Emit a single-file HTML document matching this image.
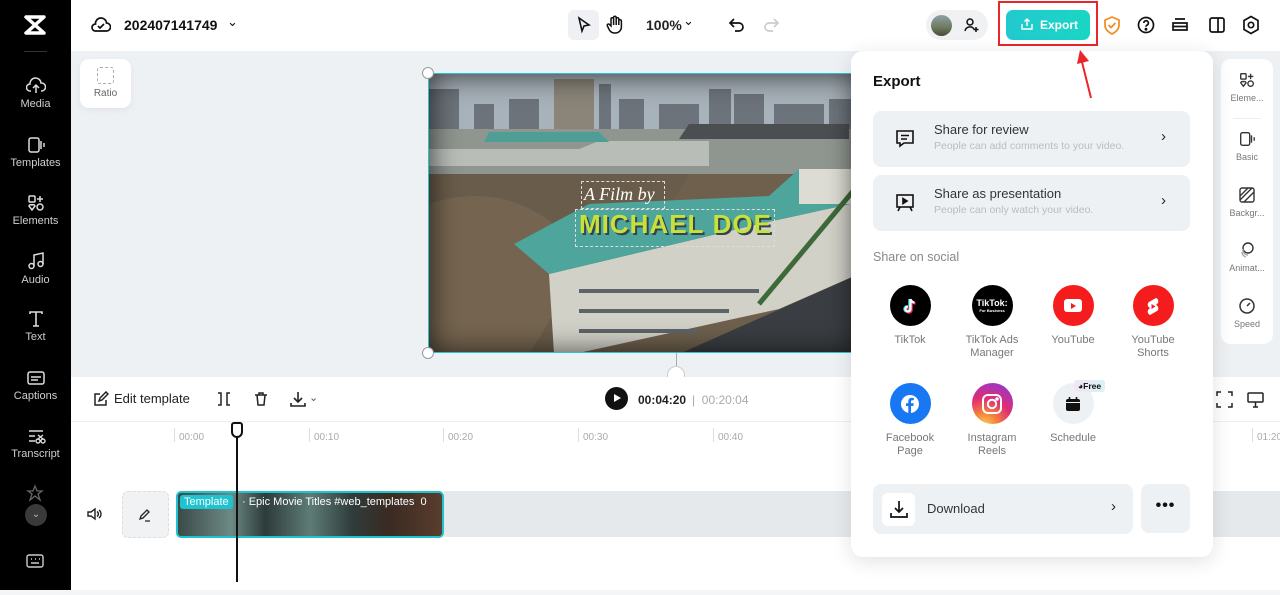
<!DOCTYPE html>
<html><head><meta charset="utf-8"><style>
*{margin:0;padding:0;box-sizing:border-box}
body{width:1280px;height:595px;overflow:hidden;font-family:"Liberation Sans",sans-serif;background:#fff;position:relative;color:#111}
.a{position:absolute}
.side{left:0;top:0;width:71px;height:590px;background:#000}
.si{position:absolute;left:0;width:71px;text-align:center;color:#cfcfcf;font-size:11px}
.si svg{display:block;margin:0 auto 3px}
.top{left:71px;top:0;width:1209px;height:51px;background:#fff}
.canvas{left:71px;top:51px;width:1209px;height:326px;background:#eef1f4}
.tb{left:71px;top:377px;width:1209px;height:45px;background:#fff;border-bottom:1px solid #eceef1}
.panel{left:851px;top:51px;width:362px;height:506px;background:#fff;border-radius:12px;box-shadow:0 4px 20px rgba(0,0,0,.12)}
.card{position:absolute;left:22px;width:317px;background:#eef1f4;border-radius:8px}
.soc{position:absolute;width:80px;text-align:center;font-size:11px;color:#777;line-height:13px}
.soc .c{width:41px;height:41px;border-radius:50%;margin:0 auto 8px;display:flex;align-items:center;justify-content:center}
.rr{left:1221px;top:59px;width:52px;height:285px;background:#fff;border-radius:10px}
.ri{position:absolute;left:0;width:52px;text-align:center;font-size:9px;color:#777}
.ri svg{display:block;margin:0 auto 4px}
</style></head><body>
<div class="a side">
 <svg class="a" style="left:24px;top:15px" width="22" height="20" viewBox="0 0 22 20"><path d="M2 2h18L2 18h18z" fill="none" stroke="#fff" stroke-width="3.5" stroke-linejoin="round"/></svg>
 <div class="a" style="left:24px;top:51px;width:23px;height:1px;background:#333"></div>
 <div class="si" style="top:77px"><svg width="20" height="18" viewBox="0 0 20 18" fill="none" stroke="#ddd" stroke-width="1.5"><path d="M5 14H4a3.5 3.5 0 0 1 0-7 5.5 5.5 0 0 1 11-1 3.5 3.5 0 0 1 1 8h-1M10 16V9M7 11l3-3 3 3"/></svg>Media</div>
 <div class="si" style="top:136px"><svg width="20" height="18" viewBox="0 0 20 18" fill="none" stroke="#ddd" stroke-width="1.5"><rect x="3" y="2" width="10" height="14" rx="2"/><path d="M15 5v8M18 7v4"/></svg>Templates</div>
 <div class="si" style="top:194px"><svg width="20" height="18" viewBox="0 0 20 18" fill="none" stroke="#ddd" stroke-width="1.5"><rect x="3" y="2" width="6" height="6" rx="1"/><path d="M14 2v6M11 5h6"/><circle cx="14" cy="13" r="3"/><path d="M3 12l3 4 3-4a2 2 0 0 0-3-1 2 2 0 0 0-3 1z"/></svg>Elements</div>
 <div class="si" style="top:251px"><svg width="20" height="20" viewBox="0 0 20 20" fill="none" stroke="#ddd" stroke-width="1.5"><path d="M8 15V4l9-2v11"/><circle cx="5.5" cy="15" r="2.5"/><circle cx="14.5" cy="13" r="2.5"/></svg>Audio</div>
 <div class="si" style="top:310px"><svg width="20" height="18" viewBox="0 0 20 18" fill="none" stroke="#ddd" stroke-width="1.6"><path d="M4 4V2h12v2M10 2v14M7 16h6"/></svg>Text</div>
 <div class="si" style="top:369px"><svg width="20" height="18" viewBox="0 0 20 18" fill="none" stroke="#ddd" stroke-width="1.5"><rect x="2" y="3" width="16" height="12" rx="2"/><path d="M5 8h10M5 11h7"/></svg>Captions</div>
 <div class="si" style="top:427px"><svg width="20" height="18" viewBox="0 0 20 18" fill="none" stroke="#ddd" stroke-width="1.4"><path d="M3 4h14M3 9h6M3 14h6"/><circle cx="12" cy="14" r="2"/><circle cx="17" cy="14" r="2"/><path d="M12 8l5 4M17 8l-5 4"/></svg>Transcript</div>
 <svg class="a" style="left:26px;top:484px" width="18" height="18" viewBox="0 0 18 18" fill="none" stroke="#666" stroke-width="1.3"><path d="M9 2l2 5h5l-4 3 2 6-5-4-5 4 2-6-4-3h5z"/></svg>
 <div class="a" style="left:25px;top:504px;width:22px;height:22px;border-radius:50%;background:#3a3a3a;color:#bbb;font-size:10px;text-align:center;line-height:22px">⌄</div>
 <svg class="a" style="left:26px;top:553px" width="18" height="16" viewBox="0 0 18 16" fill="none" stroke="#ccc" stroke-width="1.4"><rect x="1" y="2" width="16" height="12" rx="2"/><path d="M5 6h1M9 6h1M13 6h1M5 10h8"/></svg>
 <div class="a" style="left:71px;top:272px;width:6px;height:48px;background:#222;border-radius:0 5px 5px 0"></div>
</div>
<div class="a top"></div>
<svg class="a" style="left:91px;top:16px" width="20" height="18" viewBox="0 0 20 18" fill="none" stroke="#111" stroke-width="1.7"><path d="M5 15H4.5a3.5 3.5 0 0 1 0-7 5.5 5.5 0 0 1 11-1 4 4 0 0 1 0 8z"/><path d="M7 10l2 2 4-4"/></svg>
<div class="a" style="left:124px;top:17px;font-size:14px;font-weight:bold;color:#111">202407141749</div>
<div class="a" style="left:227px;top:14px;font-size:13px">⌄</div>
<div class="a" style="left:568px;top:10px;width:31px;height:30px;background:#eef0f3;border-radius:6px"></div>
<svg class="a" style="left:576px;top:16px" width="16" height="18" viewBox="0 0 16 18" fill="none" stroke="#111" stroke-width="1.6"><path d="M3 2l10 7-5 1-2 5z"/></svg>
<svg class="a" style="left:606px;top:15px" width="18" height="20" viewBox="0 0 18 20" fill="none" stroke="#111" stroke-width="1.5"><path d="M5 11V4a1.3 1.3 0 0 1 2.6 0v6V2.5a1.3 1.3 0 0 1 2.6 0V10V4a1.3 1.3 0 0 1 2.6 0v6V6a1.3 1.3 0 0 1 2.6 0v6a6 6 0 0 1-6 6h-1a6 6 0 0 1-5-3l-2-4a1.3 1.3 0 0 1 2.3-1.3z"/></svg>
<div class="a" style="left:646px;top:17px;font-size:14px;font-weight:bold;color:#222">100%</div>
<div class="a" style="left:683px;top:13px;font-size:13px">⌄</div>
<svg class="a" style="left:727px;top:16px" width="18" height="18" viewBox="0 0 18 18" fill="none" stroke="#111" stroke-width="1.7"><path d="M4 7h8a4 4 0 0 1 0 8H8M7 3L3 7l4 4"/></svg>
<svg class="a" style="left:763px;top:16px" width="18" height="18" viewBox="0 0 18 18" fill="none" stroke="#ccc" stroke-width="1.7"><path d="M14 7H6a4 4 0 0 0 0 8h4M11 3l4 4-4 4"/></svg>
<div class="a" style="left:926px;top:10px;width:62px;height:30px;background:#f0f1f3;border-radius:15px"></div>
<div class="a" style="left:931px;top:15px;width:21px;height:21px;border-radius:50%;background:linear-gradient(#8fa0a8,#6c7a5c 60%,#4a4a3a)"></div>
<svg class="a" style="left:964px;top:17px" width="16" height="16" viewBox="0 0 16 16" fill="none" stroke="#111" stroke-width="1.5"><circle cx="6" cy="5" r="3"/><path d="M1 14a5 5 0 0 1 9-2M12 10v5M9.5 12.5h5"/></svg>
<div class="a" style="left:998px;top:1px;width:100px;height:45px;border:2px solid #e8262b"></div>
<div class="a" style="left:1006px;top:10px;width:84px;height:30px;border-radius:7px;background:linear-gradient(90deg,#22c9cf,#1ad6c4);color:#fff;font-size:12px;font-weight:bold;line-height:30px;padding-left:34px">Export</div>
<svg class="a" style="left:1021px;top:18px" width="12" height="13" viewBox="0 0 12 13" fill="none" stroke="#fff" stroke-width="1.4"><path d="M6 8V1M3.5 3.5L6 1l2.5 2.5M1 6v5h10V6"/></svg>
<svg class="a" style="left:1103px;top:16px" width="18" height="19" viewBox="0 0 18 19" fill="none" stroke="#f28c1c" stroke-width="1.7"><path d="M9 1l7 3v5c0 4-3 7-7 9-4-2-7-5-7-9V4z"/><path d="M5.5 9l2.5 2.5 4.5-4.5"/></svg>
<svg class="a" style="left:1137px;top:16px" width="18" height="18" viewBox="0 0 18 18" fill="none" stroke="#111" stroke-width="1.7"><circle cx="9" cy="9" r="7.5"/><path d="M6.8 7a2.3 2.3 0 1 1 3 2.2c-.6.3-.8.8-.8 1.5"/><circle cx="9" cy="13.2" r=".6" fill="#111"/></svg>
<svg class="a" style="left:1171px;top:16px" width="18" height="18" viewBox="0 0 18 18" fill="none" stroke="#111" stroke-width="1.7"><path d="M4 3h10M2 7h14v7H2zM2 10.5h14"/></svg>
<svg class="a" style="left:1208px;top:16px" width="18" height="18" viewBox="0 0 18 18" fill="none" stroke="#111" stroke-width="1.7"><rect x="2" y="2" width="14" height="14" rx="2"/><path d="M10 2v14"/></svg>
<svg class="a" style="left:1242px;top:15px" width="18" height="20" viewBox="0 0 18 20" fill="none" stroke="#111" stroke-width="1.7"><path d="M9 1.5l7 4v9l-7 4-7-4v-9z"/><circle cx="9" cy="10" r="2.7"/></svg>

<div class="a canvas"></div>
<div class="a" style="left:80px;top:59px;width:51px;height:49px;background:#fff;border-radius:9px;box-shadow:0 2px 8px rgba(0,0,0,.06);text-align:center;font-size:10px;color:#666">
<div style="width:17px;height:17px;border:1.5px dashed #aaa;border-radius:3px;margin:8px auto 4px"></div>Ratio</div>
<!-- video -->
<div class="a" style="left:428px;top:73px;width:430px;height:280px;border:1.5px solid #21c4d0;overflow:hidden;background:#6e604d">
 <svg class="a" style="left:0;top:0" width="430" height="280" viewBox="0 0 430 280">
  <rect width="430" height="60" fill="#a8b2ba"/>
  <g fill="#6c737a">
   <rect x="0" y="15" width="30" height="50"/><rect x="45" y="30" width="20" height="35"/><rect x="80" y="25" width="30" height="40"/>
   <rect x="125" y="5" width="40" height="60" fill="#8a8578"/><rect x="170" y="10" width="12" height="55"/><rect x="190" y="25" width="25" height="40"/>
   <rect x="230" y="30" width="40" height="35"/><rect x="280" y="15" width="22" height="50"/><rect x="305" y="20" width="30" height="45"/>
   <rect x="345" y="30" width="50" height="35"/><rect x="400" y="25" width="30" height="40"/>
  </g>
  <rect y="55" width="430" height="45" fill="#8f958f"/>
  <path d="M0 75h150l20-8h110v25H0z" fill="#b9bdb8"/>
  <path d="M60 58h110l10 10H55z" fill="#4f9e96"/>
  <path d="M260 50h160v15H250z" fill="#4c4f52"/>
  <path d="M0 100h260L150 280H0z" fill="#6a5c4a"/>
  <path d="M0 130q60-20 110 10t40 60L100 280H0z" fill="#7a6a52" opacity=".7"/>
  <path d="M120 200L330 150L430 128V200L350 235L145 280H125z" fill="#d2d1c8"/>
  <path d="M85 170L160 130L340 122L370 95H430V128L330 150L120 200z" fill="#4da59b"/>
  <path d="M370 95h60v35h-60z" fill="#dcdcd4"/>
  <g fill="#5d6468"><rect x="150" y="215" width="180" height="4"/><rect x="150" y="235" width="150" height="4"/><rect x="150" y="255" width="120" height="4"/></g>
  <path d="M250 280L430 200V280z" fill="#3a3e42"/>
  <path d="M430 110L330 230" stroke="#3e6a3a" stroke-width="5"/>
 </svg>
 <div class="a" style="left:0;top:0;width:430px;height:280px;box-shadow:inset 0 0 30px rgba(0,0,0,.75)"></div>
 <div class="a" style="left:152px;top:107px;width:84px;height:28px;border:1px dashed #ddd"></div>
 <div class="a" style="left:146px;top:135px;width:200px;height:38px;border:1px dashed #ddd"></div>
 <div class="a" style="left:155px;top:110px;font-family:'Liberation Serif',serif;font-style:italic;color:#fff;font-size:18px">A Film by</div>
 <div class="a" style="left:150px;top:135px;font-weight:bold;color:#c8e03a;font-size:26px;letter-spacing:1px;text-shadow:2px 2px 0 #345">MICHAEL&nbsp;DOE</div>
</div>
<div class="a" style="left:422px;top:67px;width:12px;height:12px;border-radius:50%;background:#fff;border:1px solid #999"></div>
<div class="a" style="left:422px;top:347px;width:12px;height:12px;border-radius:50%;background:#fff;border:1px solid #999"></div>
<div class="a" style="left:676px;top:353px;width:1px;height:14px;background:#aaa"></div>
<div class="a" style="left:667px;top:366px;width:18px;height:18px;border-radius:50%;background:#fff;border:1px solid #ccc"></div>

<div class="a tb"></div>
<svg class="a" style="left:92px;top:391px" width="17" height="17" viewBox="0 0 17 17" fill="none" stroke="#222" stroke-width="1.5"><path d="M8 3H3v11h11V9M7 10l1-3 6-6 2 2-6 6z"/></svg>
<div class="a" style="left:114px;top:391px;font-size:13px;color:#222">Edit template</div>
<svg class="a" style="left:216px;top:391px" width="16" height="16" viewBox="0 0 16 16" fill="none" stroke="#222" stroke-width="1.5"><path d="M2 2h3v12H2M14 2h-3v12h3"/></svg>
<svg class="a" style="left:253px;top:391px" width="16" height="16" viewBox="0 0 16 16" fill="none" stroke="#222" stroke-width="1.5"><path d="M2 4h12M6 4V2h4v2M4 4l1 10h6l1-10"/></svg>
<svg class="a" style="left:289px;top:390px" width="18" height="18" viewBox="0 0 18 18" fill="none" stroke="#222" stroke-width="1.6"><path d="M9 2v10M5 8l4 4 4-4M2 13v3h14v-3"/></svg>
<div class="a" style="left:309px;top:391px;font-size:11px;color:#555">⌄</div>
<div class="a" style="left:605px;top:387px;width:23px;height:23px;border-radius:50%;background:#111"></div>
<div class="a" style="left:614px;top:394px;width:0;height:0;border-left:7px solid #fff;border-top:4.5px solid transparent;border-bottom:4.5px solid transparent"></div>
<div class="a" style="left:638px;top:393px;font-size:12px;font-weight:bold;color:#222">00:04:20</div>
<div class="a" style="left:692px;top:393px;font-size:12px;color:#aaa">| &nbsp;00:20:04</div>
<svg class="a" style="left:1216px;top:391px" width="17" height="17" viewBox="0 0 17 17" fill="none" stroke="#222" stroke-width="1.5"><path d="M1 5V1h4M12 1h4v4M16 12v4h-4M5 16H1v-4"/></svg>
<svg class="a" style="left:1247px;top:391px" width="17" height="17" viewBox="0 0 17 17" fill="none" stroke="#222" stroke-width="1.5"><rect x="1" y="2" width="15" height="9" rx="1"/><path d="M8.5 11v5M6 16h5"/></svg>
<!-- ruler -->
<div class="a" style="left:174px;top:428px;width:1px;height:14px;background:#ddd"></div>
<div class="a" style="left:179px;top:432px;font-size:10px;color:#aaa">00:00</div>
<div class="a" style="left:309px;top:428px;width:1px;height:14px;background:#ddd"></div>
<div class="a" style="left:314px;top:432px;font-size:10px;color:#aaa">00:10</div>
<div class="a" style="left:443px;top:428px;width:1px;height:14px;background:#ddd"></div>
<div class="a" style="left:448px;top:432px;font-size:10px;color:#aaa">00:20</div>
<div class="a" style="left:578px;top:428px;width:1px;height:14px;background:#ddd"></div>
<div class="a" style="left:583px;top:432px;font-size:10px;color:#aaa">00:30</div>
<div class="a" style="left:713px;top:428px;width:1px;height:14px;background:#ddd"></div>
<div class="a" style="left:718px;top:432px;font-size:10px;color:#aaa">00:40</div>
<div class="a" style="left:1252px;top:428px;width:1px;height:14px;background:#ddd"></div>
<div class="a" style="left:1257px;top:432px;font-size:10px;color:#aaa">01:20</div>
<!-- track -->
<svg class="a" style="left:86px;top:507px" width="16" height="14" viewBox="0 0 16 14" fill="none" stroke="#222" stroke-width="1.4"><path d="M2 5h3l4-3v10l-4-3H2zM11 4.5a3 3 0 0 1 0 5M13 3a5 5 0 0 1 0 8"/></svg>
<div class="a" style="left:122px;top:491px;width:47px;height:47px;background:#f0f2f4;border:1px dashed #ddd;border-radius:6px"></div>
<svg class="a" style="left:138px;top:508px" width="14" height="14" viewBox="0 0 14 14" fill="none" stroke="#222" stroke-width="1.3"><path d="M2 11l1-3 6-6 2 2-6 6zM7 13h5"/></svg>
<div class="a" style="left:444px;top:491px;width:836px;height:46px;background:#e6e9ec"></div>
<div class="a" style="left:176px;top:491px;width:268px;height:47px;border:2px solid #1fc3d0;border-radius:5px;overflow:hidden;background:linear-gradient(90deg,#3b4a48 0,#6d8a84 20%,#2d3b3a 33%,#5e7c77 50%,#2f3c3a 66%,#3a2a22 80%,#5a3d2e 100%)">
 <div class="a" style="left:2px;top:2px;background:#1fc3d0;color:#fff;font-size:11px;padding:1px 4px;border-radius:3px">Template</div>
 <div class="a" style="left:64px;top:3px;color:#fff;font-size:11px;white-space:nowrap">· Epic Movie Titles #web_templates &nbsp;0</div>
</div>
<div class="a" style="left:231px;top:422px;width:12px;height:16px;border:2px solid #111;border-radius:3px 3px 6px 6px;background:#fff"></div>
<div class="a" style="left:236px;top:437px;width:2px;height:145px;background:#111"></div>
<div class="a" style="left:0;top:590px;width:1280px;height:5px;background:#f4f5f6"></div>
<!-- right rail -->
<div class="a rr">
 <div class="ri" style="top:12px"><svg width="18" height="18" viewBox="0 0 20 18" fill="none" stroke="#333" stroke-width="1.5"><rect x="3" y="2" width="6" height="6" rx="1"/><path d="M14 2v6M11 5h6"/><circle cx="14" cy="13" r="3"/><path d="M3 12l3 4 3-4a2 2 0 0 0-3-1 2 2 0 0 0-3 1z"/></svg>Eleme...</div>
 <div style="position:absolute;left:12px;top:59px;width:28px;height:1px;background:#eee"></div>
 <div class="ri" style="top:71px"><svg width="18" height="18" viewBox="0 0 20 18" fill="none" stroke="#333" stroke-width="1.5"><rect x="3" y="2" width="10" height="14" rx="2"/><path d="M15 5v8M18 7v4"/></svg>Basic</div>
 <div class="ri" style="top:127px"><svg width="18" height="18" viewBox="0 0 18 18" fill="none" stroke="#333" stroke-width="1.4"><rect x="2" y="2" width="14" height="14" rx="2"/><path d="M2 10l8-8M6 16l10-10M2 14L14 2"/></svg>Backgr...</div>
 <div class="ri" style="top:182px"><svg width="18" height="18" viewBox="0 0 18 18" fill="none" stroke="#333" stroke-width="1.4"><circle cx="10" cy="7" r="5"/><path d="M5 8a5 5 0 0 0 5 6M4 11a5 5 0 0 0 4 5" stroke="#aaa"/></svg>Animat...</div>
 <div class="ri" style="top:238px"><svg width="18" height="18" viewBox="0 0 18 18" fill="none" stroke="#333" stroke-width="1.5"><circle cx="9" cy="9" r="7"/><path d="M9 9l3-3"/></svg>Speed</div>
</div>
<!-- panel -->
<div class="a panel">
 <div class="a" style="left:22px;top:22px;font-size:15px;font-weight:bold;color:#111">Export</div>
 <div class="card" style="top:60px;height:56px">
  <svg class="a" style="left:22px;top:18px" width="20" height="20" viewBox="0 0 20 20" fill="none" stroke="#111" stroke-width="1.6"><path d="M2 2h16v12H9l-4 3v-3H2z"/><path d="M6 6.5h8M6 10h6"/></svg>
  <div class="a" style="left:61px;top:11px;font-size:13px;color:#333">Share for review</div>
  <div class="a" style="left:61px;top:29px;font-size:10.5px;color:#bbb">People can add comments to your video.</div>
  <div class="a" style="left:288px;top:17px;font-size:15px;color:#222">›</div>
 </div>
 <div class="card" style="top:124px;height:56px">
  <svg class="a" style="left:22px;top:18px" width="20" height="20" viewBox="0 0 20 20" fill="none" stroke="#111" stroke-width="1.6"><rect x="2" y="2" width="16" height="12"/><path d="M8 5.5l4 2.5-4 2.5z" fill="#111"/><path d="M5 14l-2 4M15 14l2 4"/></svg>
  <div class="a" style="left:61px;top:11px;font-size:13px;color:#333">Share as presentation</div>
  <div class="a" style="left:61px;top:29px;font-size:10.5px;color:#bbb">People can only watch your video.</div>
  <div class="a" style="left:288px;top:17px;font-size:15px;color:#222">›</div>
 </div>
 <div class="a" style="left:22px;top:199px;font-size:12.5px;color:#888">Share on social</div>
 <div class="soc" style="left:19px;top:234px"><div class="c" style="background:#000"><svg width="20" height="20" viewBox="0 0 20 20"><path d="M10.5 3v10a2.5 2.5 0 1 1-2.5-2.5" fill="none" stroke="#25f4ee" stroke-width="2.4" transform="translate(-1,0)"/><path d="M10.5 3v10a2.5 2.5 0 1 1-2.5-2.5M10.5 3c.5 2 2 3.3 4 3.5" fill="none" stroke="#fe2c55" stroke-width="2.4" transform="translate(1,1)"/><path d="M10.5 3v10a2.5 2.5 0 1 1-2.5-2.5M10.5 3c.5 2 2 3.3 4 3.5" fill="none" stroke="#fff" stroke-width="2.2"/></svg></div>TikTok</div>
 <div class="soc" style="left:101px;top:234px"><div class="c" style="background:#000;color:#fff;font-size:9px;font-weight:bold;flex-direction:column;line-height:9px">TikTok:<span style="font-size:4px;line-height:5px">For Business</span></div>TikTok Ads<br>Manager</div>
 <div class="soc" style="left:182px;top:234px"><div class="c" style="background:#f41c1c"><div style="width:18px;height:13px;background:#fff;border-radius:3px;position:relative"><div style="position:absolute;left:7px;top:3.5px;border-left:5px solid #f41c1c;border-top:3px solid transparent;border-bottom:3px solid transparent"></div></div></div>YouTube</div>
 <div class="soc" style="left:262px;top:234px"><div class="c" style="background:#f41c1c"><svg width="16" height="20" viewBox="0 0 16 20"><path d="M11 2L4 6a3.5 3.5 0 0 0 1 6l-1 1a3.5 3.5 0 0 0 1 6l7-4a3.5 3.5 0 0 0-1-6l1-1a3.5 3.5 0 0 0-1-6z" fill="#fff"/><path d="M6.5 8v5l4-2.5z" fill="#f41c1c"/></svg></div>YouTube<br>Shorts</div>
 <div class="soc" style="left:19px;top:332px"><div class="c" style="background:#1877f2"><svg width="20" height="20" viewBox="0 0 20 20"><circle cx="10" cy="10" r="9" fill="#fff"/><path d="M11 19v-7h2.3l.4-2.7H11V7.6c0-.8.3-1.3 1.4-1.3h1.4V4a17 17 0 0 0-2.1-.1c-2 0-3.4 1.3-3.4 3.5v1.9H6v2.7h2.3v7z" fill="#1877f2"/></svg></div>Facebook<br>Page</div>
 <div class="soc" style="left:101px;top:332px"><div class="c" style="background:radial-gradient(circle at 30% 105%,#fdcf5a 0,#f5833a 25%,#e02c74 55%,#9d37c2 85%)"><svg width="22" height="22" viewBox="0 0 22 22" fill="none" stroke="#fff" stroke-width="2"><rect x="2" y="2" width="18" height="18" rx="5"/><circle cx="11" cy="11" r="4.2"/><circle cx="16" cy="6" r=".8" fill="#fff"/></svg></div>Instagram<br>Reels</div>
 <div class="soc" style="left:182px;top:332px"><div class="c" style="background:#eef1f4"><svg width="16" height="16" viewBox="0 0 16 16"><rect x="1" y="3" width="14" height="12" rx="2" fill="#111"/><path d="M4.5 1v4M11.5 1v4" stroke="#111" stroke-width="1.6"/><path d="M1 6.5h14" stroke="#eef1f4" stroke-width="1"/></svg></div>Schedule</div>
 <div class="a" style="left:223px;top:329px;height:12px;padding:0 4px;border-radius:3px;background:linear-gradient(90deg,#f4e5f5,#d6f3f5);font-size:8.5px;font-weight:bold;color:#111;line-height:12px">◕Free</div>
 <div class="card" style="top:433px;height:50px;width:260px">
  <div class="a" style="left:9px;top:9px;width:33px;height:33px;background:#fff;border-radius:6px"></div>
  <svg class="a" style="left:16px;top:15px" width="20" height="20" viewBox="0 0 20 20" fill="none" stroke="#111" stroke-width="1.7"><path d="M10 2v11M6 9l4 4 4-4M2 14v4h16v-4"/></svg>
  <div class="a" style="left:54px;top:17px;font-size:13px;color:#333">Download</div>
  <div class="a" style="left:238px;top:14px;font-size:15px;color:#222">›</div>
 </div>
 <div class="card" style="top:433px;left:290px;width:49px;height:49px;text-align:center;font-size:16px;font-weight:bold;line-height:44px;letter-spacing:1px">•••</div>
</div>
<svg class="a" style="left:1076px;top:48px" width="20" height="52" viewBox="0 0 20 52"><path d="M15 50L5 10" stroke="#e8262b" stroke-width="2"/><path d="M1 16L4 2l9 11z" fill="#e8262b"/></svg>
</body></html>
